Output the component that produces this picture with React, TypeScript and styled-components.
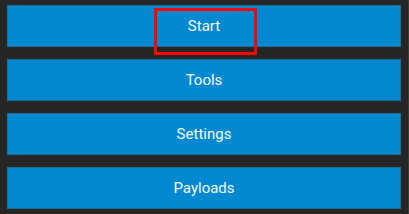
import React from "react";
import styled, { createGlobalStyle } from "styled-components";

const Global = createGlobalStyle`
  html, body { margin: 0; padding: 0; background: #262626; }
  body { font-family: Roboto, "Noto Sans", sans-serif; }
`;

const Screen = styled.div`
  width: 409px;
  height: 214px;
  box-sizing: border-box;
  background: #262626;
  border-right: 1px solid #3a3a3a;
  padding: 5px 7px 0 7px;
  display: flex;
  flex-direction: column;
  gap: 12px;
`;

const MenuButton = styled.div`
  position: relative;
  height: 42px;
  box-sizing: border-box;
  background: #0089d1;
  border: 1px solid #1f6e9c;
  color: #f4f8fb;
  font-size: 15px;
  display: flex;
  align-items: center;
  justify-content: center;
`;

const Highlight = styled.div`
  position: absolute;
  left: 146px;
  top: 2px;
  width: 103px;
  height: 47px;
  box-sizing: border-box;
  border: 3px solid #ff0000;
  pointer-events: none;
`;

const items = ["Start", "Tools", "Settings", "Payloads"];

export default function App() {
  return (
    <>
      <Global />
      <Screen>
        {items.map((label, i) => (
          <MenuButton key={label}>
            {label}
            {i === 0 && <Highlight />}
          </MenuButton>
        ))}
      </Screen>
    </>
  );
}
